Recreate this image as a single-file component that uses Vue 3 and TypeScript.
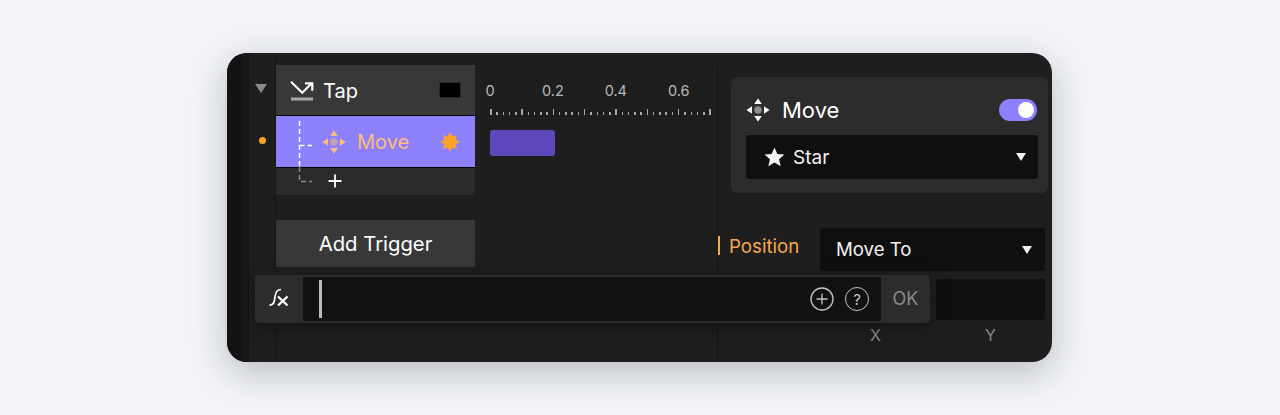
<script setup lang="ts">
const ticks = Array.from({ length: 36 }, (_, i) => i)
const labels = ['0', '0.2', '0.4', '0.6']

// 8-point burst for the trigger's star
const burst = Array.from({ length: 16 }, (_, i) => {
  const r = i % 2 === 0 ? 10 : 6
  const a = (i * Math.PI) / 8 - Math.PI / 2
  return `${(11 + r * Math.cos(a)).toFixed(2)},${(11 + r * Math.sin(a)).toFixed(2)}`
}).join(' ')
</script>

<template>
  <div class="page">
    <div class="window">
      <div class="rail"></div>
      <div class="rail2"></div>
      <div class="gutter">
        <span class="caret"></span>
        <span class="dot"></span>
      </div>

      <div class="triggers">
        <div class="row tap">
          <svg class="tap-icon" width="24" height="22" viewBox="0 0 24 22" fill="none">
            <path d="M1 2.7 L12.3 13.7 L22 4" stroke="#fff" stroke-width="2.2" />
            <path d="M15 4.3 H22.3 V11.7" stroke="#fff" stroke-width="2.2" />
            <path d="M1 20 H23" stroke="#a8a8a8" stroke-width="2.8" />
          </svg>
          <span class="tap-label">Tap</span>
          <span class="swatch"></span>
        </div>
        <div class="row move">
          <svg class="move-icon" width="24" height="24" viewBox="0 0 24 24">
            <g fill="#ffbd78">
              <path d="M12 0.5 L15.8 6 H8.2 Z" />
              <path d="M12 23.5 L15.8 18 H8.2 Z" />
              <path d="M0.5 12 L6 8.2 V15.8 Z" />
              <path d="M23.5 12 L18 8.2 V15.8 Z" />
            </g>
            <circle cx="12" cy="12" r="3.8" fill="#c6a0b4" />
          </svg>
          <span class="move-label">Move</span>
          <svg class="burst" width="22" height="22" viewBox="0 0 22 22">
            <polygon :points="burst" fill="#f9a32b" />
          </svg>
        </div>
        <div class="row add">
          <svg class="plus" width="14" height="14" viewBox="0 0 14 14">
            <path d="M7 0.5 V13.5 M0.5 7 H13.5" stroke="#fff" stroke-width="1.8" />
          </svg>
        </div>
        <svg class="tree" width="20" height="66" viewBox="0 0 20 66" fill="none">
          <path d="M1.5 0 V46" stroke="#fff" stroke-width="1.5" stroke-dasharray="5 3" />
          <path d="M1.5 24.5 H14" stroke="#fff" stroke-width="1.5" stroke-dasharray="5 3" />
          <path d="M1.5 46 V60.5 H14" stroke="#8a8a8a" stroke-width="1.5" stroke-dasharray="5 3" />
        </svg>
        <div class="add-trigger">Add Trigger</div>
      </div>

      <div class="timeline">
        <div class="scale">
          <span v-for="l in labels" :key="l" class="scale-label">{{ l }}</span>
        </div>
        <div class="ticks">
          <span v-for="t in ticks" :key="t" class="tick" :class="{ major: t % 5 === 0 }"></span>
        </div>
        <div class="clip"></div>
      </div>

      <div class="inspector">
        <div class="panel">
          <div class="panel-head">
            <svg width="24" height="24" viewBox="0 0 24 24">
              <g fill="#fff">
                <path d="M12 0.5 L15.8 6 H8.2 Z" />
                <path d="M12 23.5 L15.8 18 H8.2 Z" />
                <path d="M0.5 12 L6 8.2 V15.8 Z" />
                <path d="M23.5 12 L18 8.2 V15.8 Z" />
              </g>
              <circle cx="12" cy="12" r="3.8" fill="#8c8c8c" />
            </svg>
            <span class="panel-title">Move</span>
            <span class="toggle"><span class="knob"></span></span>
          </div>
          <div class="select target">
            <svg width="21" height="20" viewBox="0 0 21 20">
              <path d="M10.5 0.5 L13.4 6.9 L20.4 7.6 L15.1 12.3 L16.7 19.2 L10.5 15.6 L4.3 19.2 L5.9 12.3 L0.6 7.6 L7.6 6.9 Z" fill="#f2f2f2" />
            </svg>
            <span>Star</span>
            <i class="arrow"></i>
          </div>
        </div>

        <div class="position">
          <span class="pos-mark"></span>
          <span class="pos-label">Position</span>
          <div class="select move-to">
            <span class="move-to-text">Move To</span>
            <i class="arrow"></i>
          </div>
        </div>

        <div class="coords">
          <div class="coord"><div class="coord-box"></div><span>X</span></div>
          <div class="coord"><div class="coord-box"></div><span>Y</span></div>
        </div>
      </div>

      <div class="formula">
        <div class="fx">
          <svg width="20" height="20" viewBox="0 0 20 20" fill="none">
            <path d="M0.5 17 C5 17.5 5.5 13 6 9 C6.5 4.5 7.5 1.5 12 1.5" stroke="#fff" stroke-width="1.7" />
            <path d="M9 8.5 L18.5 17.5 M18.5 8.5 L9 17.5" stroke="#fff" stroke-width="2.4" />
          </svg>
        </div>
        <div class="input">
          <span class="cursor"></span>
          <svg class="circle-btn" width="24" height="24" viewBox="0 0 24 24" fill="none">
            <circle cx="12" cy="12" r="11" stroke="#c4c4c4" stroke-width="1.3" />
            <path d="M12 6.5 V17.5 M6.5 12 H17.5" stroke="#c4c4c4" stroke-width="1.3" />
          </svg>
          <span class="help">?</span>
        </div>
        <div class="ok">OK</div>
      </div>
    </div>
  </div>
</template>

<style scoped>
.page {
  width: 1280px;
  height: 415px;
  padding: 53px 0 0 227px;
  box-sizing: border-box;
  background: #f2f4f8;
  font-family: Inter, 'Liberation Sans', sans-serif;
  overflow: hidden;
}
.window {
  position: relative;
  width: 825px;
  height: 309px;
  display: flex;
  border-radius: 20px;
  overflow: hidden;
  background: #1e1e1e;
  box-shadow: 0 10px 36px rgba(20, 24, 40, 0.26);
}
.rail {
  width: 15px;
  background: #131313;
}
.rail2 {
  width: 6px;
  background: #191919;
  border-right: 1px solid #141414;
}
.gutter {
  width: 27px;
  padding-top: 31px;
  box-sizing: border-box;
  display: flex;
  flex-direction: column;
  align-items: center;
  border-right: 1px solid #161616;
}
.caret {
  width: 0;
  height: 0;
  border-left: 6px solid transparent;
  border-right: 6px solid transparent;
  border-top: 9px solid #8a8a8a;
  margin-left: -2px;
}
.dot {
  width: 7px;
  height: 7px;
  margin-top: 44px;
  border-radius: 50%;
  background: #f9a32b;
}
.triggers {
  position: relative;
  width: 199px;
  padding-top: 12px;
  display: flex;
  flex-direction: column;
}
.row {
  display: flex;
  align-items: center;
  box-sizing: border-box;
}
.tap {
  height: 50px;
  padding: 0 14px;
  background: #383838;
  color: #fff;
  font-size: 20px;
}
.tap-label {
  margin-left: 9px;
  margin-top: 1px;
}
.swatch {
  margin-left: auto;
  width: 22px;
  height: 16px;
  background: #000;
  border: 1px solid #2a2a2a;
  box-sizing: border-box;
}
.move {
  height: 53px;
  padding: 0 14px 0 46px;
  background: #8c80fb;
  border-top: 1px solid #000;
  border-bottom: 1px solid #000;
  color: #ffbd78;
  font-size: 20px;
}
.move-label {
  margin-left: 11px;
}
.burst {
  margin-left: auto;
}
.add {
  height: 27px;
  padding-left: 52px;
  background: #2b2b2b;
}
.plus {
  margin-bottom: 2px;
}
.tree {
  position: absolute;
  left: 22px;
  top: 68px;
}
.add-trigger {
  margin-top: 25px;
  height: 47px;
  display: flex;
  align-items: center;
  justify-content: center;
  background: #383838;
  color: #fff;
  font-size: 20.3px;
}
.timeline {
  width: 243px;
  margin-top: 11px;
  box-sizing: border-box;
  padding: 17px 0 0 15px;
  border-right: 1px solid #161616;
  border-top: 1px solid #191919;
}
.scale {
  display: flex;
  height: 18px;
}
.scale-label {
  flex: none;
  width: 0;
  margin-right: 62.9px;
  display: flex;
  justify-content: center;
  white-space: nowrap;
  font-size: 14.5px;
  line-height: 18px;
  color: #b8b8b8;
}
.ticks {
  display: flex;
  align-items: flex-end;
  justify-content: space-between;
  width: 221px;
  height: 7px;
  margin-top: 8px;
}
.tick {
  width: 1.5px;
  height: 3px;
  background: #aaa;
}
.tick.major {
  height: 6px;
}
.clip {
  width: 65px;
  height: 26px;
  margin-top: 15px;
  border-radius: 3px;
  background: #5f48bb;
}
.inspector {
  flex: 1;
  margin-top: 11px;
  border-top: 1px solid #191919;
  padding: 12px 4px 0 13px;
  display: flex;
  flex-direction: column;
}
.panel {
  height: 116px;
  box-sizing: border-box;
  padding: 17px 10px 0 15px;
  border-radius: 6px;
  background: #2c2c2c;
}
.panel-head {
  display: flex;
  align-items: center;
  height: 31px;
  margin-bottom: 10px;
  color: #fff;
  font-size: 22px;
}
.panel-title {
  margin-left: 12px;
}
.toggle {
  margin-left: auto;
  margin-right: 1px;
  width: 38px;
  height: 22px;
  padding: 3px;
  box-sizing: border-box;
  display: flex;
  justify-content: flex-end;
  border-radius: 11px;
  background: #8c80fb;
}
.knob {
  width: 16px;
  height: 16px;
  border-radius: 50%;
  background: #fff;
}
.select {
  display: flex;
  align-items: center;
  box-sizing: border-box;
  border-radius: 3px;
  background: #0f0f0f;
  color: #f2f2f2;
}
.target {
  height: 44px;
  padding: 0 12px 0 18px;
  gap: 8px;
  font-size: 19px;
}
.arrow {
  margin-left: auto;
  width: 0;
  height: 0;
  border-left: 5px solid transparent;
  border-right: 5px solid transparent;
  border-top: 8px solid #f2f2f2;
}
.position {
  display: flex;
  align-items: center;
  height: 43px;
  margin-top: 35px;
  margin-left: -13px;
  margin-right: 3px;
}
.pos-mark {
  width: 2px;
  height: 19px;
  margin-bottom: 9px;
  background: #f6a84f;
}
.pos-label {
  margin-left: 9px;
  margin-bottom: 7px;
  width: 91px;
  color: #f6a84f;
  font-size: 18.7px;
}
.move-to {
  flex: 1;
  height: 43px;
  padding: 0 13px 0 16px;
  font-size: 18.6px;
}
.move-to-text {
  margin-bottom: 2px;
}
.coords {
  display: flex;
  gap: 6px;
  margin: 8px 3px 0 90px;
}
.coord {
  flex: 1;
  display: flex;
  flex-direction: column;
  align-items: center;
  color: #8a8a8a;
  font-size: 16px;
}
.coord-box {
  width: 100%;
  height: 41px;
  margin-bottom: 5px;
  border-radius: 3px;
  background: #0f0f0f;
}
.formula {
  position: absolute;
  left: 28px;
  top: 222px;
  width: 675px;
  height: 48px;
  display: flex;
  border-radius: 4px;
  background: #2c2c2c;
  box-shadow: 0 4px 18px rgba(0, 0, 0, 0.35);
  overflow: hidden;
}
.fx {
  width: 48px;
  display: flex;
  align-items: center;
  justify-content: center;
  padding-bottom: 2px;
  box-sizing: border-box;
}
.input {
  flex: 1;
  margin: 2px 0;
  display: flex;
  align-items: center;
  padding: 0 12px 0 16px;
  background: #111;
}
.cursor {
  width: 3px;
  height: 38px;
  background: #bbb;
  margin-right: auto;
}
.help {
  width: 22px;
  height: 22px;
  margin-left: 11px;
  border: 1.3px solid #c4c4c4;
  border-radius: 50%;
  display: flex;
  align-items: center;
  justify-content: center;
  color: #c4c4c4;
  font-size: 15px;
}
.ok {
  width: 49px;
  display: flex;
  align-items: center;
  justify-content: center;
  color: #8a8a8a;
  font-size: 18px;
  padding-bottom: 2px;
  box-sizing: border-box;
}
</style>
